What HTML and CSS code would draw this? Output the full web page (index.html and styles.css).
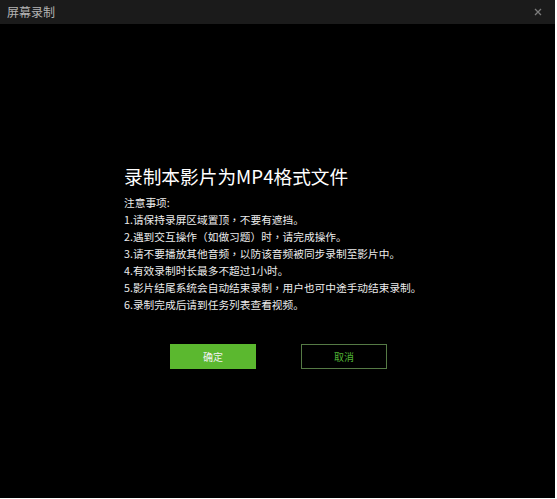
FILE: index.html
```html
<!DOCTYPE html>
<html lang="zh-CN">
<head>
<meta charset="utf-8">
<title>屏幕录制</title>
<link rel="stylesheet" href="styles.css">
</head>
<body>
<div class="window">
  <div class="titlebar">
    <span class="title">屏幕录制</span>
    <svg class="close" width="8" height="8" viewBox="0 0 8 8" aria-hidden="true">
      <path d="M1 1 L7 7 M7 1 L1 7" stroke="#7c7c7c" stroke-width="1.3" fill="none"/>
    </svg>
  </div>
  <div class="content">
    <div class="panel">
      <h1 class="heading">录制本影片为MP4格式文件</h1>
      <div class="notes">
        <p>注意事项:</p>
        <p>1.请保持录屏区域置顶<span class="punct" lang="zh-TW">，</span>不要有遮挡。</p>
        <p>2.遇到交互操作<span class="punct" lang="zh-TW">（</span>如做习题<span class="punct" lang="zh-TW">）</span>时<span class="punct" lang="zh-TW">，</span>请完成操作。</p>
        <p>3.请不要播放其他音频<span class="punct" lang="zh-TW">，</span>以防该音频被同步录制至影片中。</p>
        <p>4.有效录制时长最多不超过1小时。</p>
        <p>5.影片结尾系统会自动结束录制<span class="punct" lang="zh-TW">，</span>用户也可中途手动结束录制。</p>
        <p>6.录制完成后请到任务列表查看视频。</p>
      </div>
      <div class="actions">
        <button class="btn btn-ok">确定</button>
        <button class="btn btn-cancel">取消</button>
      </div>
    </div>
  </div>
</div>
</body>
</html>
```

FILE: styles.css
```css
html, body {
  margin: 0;
  padding: 0;
  background: #ffffff;
}
body {
  font-family: "Noto Sans CJK SC", "Noto Sans", sans-serif;
}
.window {
  width: 555px;
  height: 498px;
  display: flex;
  flex-direction: column;
  background: #000;
}
.titlebar {
  height: 24px;
  flex: none;
  background: #1b1b1b;
  display: flex;
  align-items: center;
  justify-content: space-between;
  padding: 0 13px 0 7px;
}
.title {
  color: #b4b4b4;
  font-size: 12px;
  line-height: 24px;
}
.close {
  display: block;
  margin-top: -1px;
}
.content {
  flex: 1;
  background: #000;
}
.panel {
  padding: 139px 0 0 124px;
}
.heading {
  margin: 0;
  font-size: 18.7px;
  font-weight: 400;
  line-height: 26px;
  color: #ffffff;
}
.notes {
  margin-top: 5px;
}
.notes p {
  margin: 0;
  font-size: 10.7px;
  line-height: 17px;
  color: #ececec;
  white-space: nowrap;
}
.punct {
  font-family: "Noto Sans CJK TC", sans-serif;
}
.actions {
  display: flex;
  gap: 45px;
  margin-top: 31px;
  padding-left: 46px;
}
.btn {
  width: 86px;
  height: 25px;
  padding: 0;
  font-family: "Noto Sans CJK SC", sans-serif;
  font-size: 10px;
  cursor: pointer;
  box-sizing: border-box;
}
.btn-ok {
  background: #5bb82f;
  border: none;
  color: #f2f2f2;
}
.btn-cancel {
  background: #000;
  border: 1px solid #557a45;
  color: #4fb234;
}
```
